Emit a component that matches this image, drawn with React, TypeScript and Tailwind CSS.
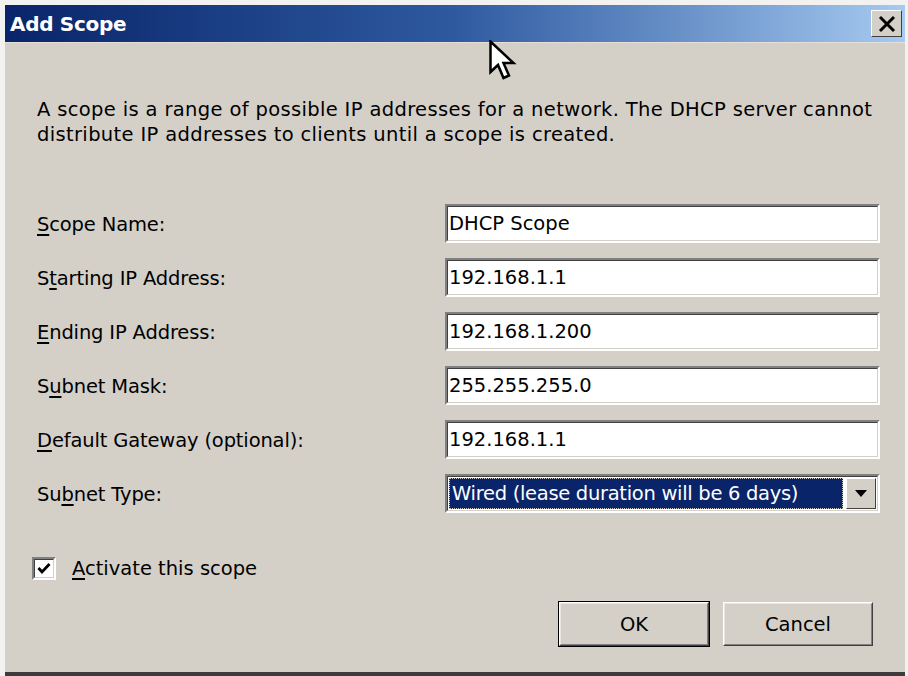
import React from "react";

const font = { fontFamily: '"DejaVu Sans", Verdana, sans-serif' };

function Key({ children }: { children: React.ReactNode }) {
  return <span className="underline underline-offset-[3px] decoration-[1.5px]">{children}</span>;
}

function Field({ label, value }: { label: React.ReactNode; value: string }) {
  return (
    <div className="flex items-center h-[54px]">
      <div className="w-[408px] pt-[3px] text-[19.5px] text-black tracking-[-0.15px]">{label}</div>
      <div className="flex-1 h-[39px] border-2 border-t-[#808080] border-l-[#808080] border-b-white border-r-white">
        <div className="h-full border border-t-[#404040] border-l-[#404040] border-b-[#d4d0c8] border-r-[#d4d0c8] bg-white flex items-center pl-[1px] pt-[1px] text-[19.5px] text-black">
          {value}
        </div>
      </div>
    </div>
  );
}

function Button({ children, isDefault }: { children: React.ReactNode; isDefault?: boolean }) {
  return (
    <div className={isDefault ? "border border-black" : "border border-transparent"}>
      <div className="w-[150px] h-[44px] border border-t-white border-l-white border-b-[#404040] border-r-[#404040] bg-[#d4d0c8]">
        <div className="h-full border border-t-[#e8e6e0] border-l-[#e8e6e0] border-b-[#808080] border-r-[#808080] flex items-center justify-center pt-[2px] text-[19.5px] text-black">
          {children}
        </div>
      </div>
    </div>
  );
}

export default function App() {
  return (
    <div style={font} className="relative w-[908px] h-[676px] bg-[#f2f2f0] pt-[5px] pl-[5px] pr-[3px] overflow-hidden">
      <div className="h-[671px] bg-[#d4d0c8] border-b-[4px] border-b-[#3c3c3c] flex flex-col">
        {/* title bar */}
        <div className="h-[37px] flex items-center justify-between pl-[5px] pr-[3px] bg-gradient-to-r from-[#0a246a] via-[#2f5aa0] to-[#a6caf0]">
          <span className="text-white font-bold text-[20px] tracking-[-0.3px] pt-[1px]">Add Scope</span>
          <div className="w-[31px] h-[27px] bg-[#d4d0c8] border border-t-white border-l-white border-b-[#404040] border-r-[#404040] flex items-center justify-center">
            <svg width="20" height="18" viewBox="0 0 20 18">
              <path d="M3 2 L17 16 M17 2 L3 16" stroke="black" strokeWidth="3" />
            </svg>
          </div>
        </div>
        <div className="h-[1px] bg-[#e4e0d8]" />

        <div className="flex flex-col pl-[32px] pr-[25px]">
          <p className="mt-[54px] text-[19.5px] leading-[25px] tracking-[0.35px] text-black">
            A scope is a range of possible IP addresses for a network. The DHCP server cannot
            <br />
            distribute IP addresses to clients until a scope is created.
          </p>

          <div className="mt-[49px] flex flex-col">
            <Field label={<><Key>S</Key>cope Name:</>} value="DHCP Scope" />
            <Field label={<>S<Key>t</Key>arting IP Address:</>} value="192.168.1.1" />
            <Field label={<><Key>E</Key>nding IP Address:</>} value="192.168.1.200" />
            <Field label={<>S<Key>u</Key>bnet Mask:</>} value="255.255.255.0" />
            <Field label={<><Key>D</Key>efault Gateway (optional):</>} value="192.168.1.1" />
            <div className="flex items-center h-[54px]">
              <div className="w-[408px] pt-[3px] text-[19.5px] text-black tracking-[-0.15px]">
                Su<Key>b</Key>net Type:
              </div>
              <div className="flex-1 h-[39px] border-2 border-t-[#808080] border-l-[#808080] border-b-white border-r-white">
                <div className="h-full border border-t-[#404040] border-l-[#404040] border-b-[#d4d0c8] border-r-[#d4d0c8] bg-white flex items-center p-[1px] gap-[3px]">
                  <div className="flex-1 h-full bg-[#0a246a] border border-dotted border-[#c8c8c8] flex items-center pl-[2px] pt-[2px] text-[19.5px] tracking-[-0.3px] text-white">
                    Wired (lease duration will be 6 days)
                  </div>
                  <div className="w-[30px] h-full bg-[#d4d0c8] border border-t-white border-l-white border-b-[#404040] border-r-[#404040] flex items-center justify-center">
                    <svg width="12" height="7" viewBox="0 0 12 7">
                      <path d="M0 0 H12 L6 7 Z" fill="black" />
                    </svg>
                  </div>
                </div>
              </div>
            </div>
          </div>

          <div className="mt-[36px] flex items-center h-[24px]">
            <div className="w-[24px] h-[23px] -ml-[5px] border-2 border-t-[#808080] border-l-[#808080] border-b-white border-r-white">
              <div className="w-full h-full bg-white border border-t-[#404040] border-l-[#404040] border-b-[#d4d0c8] border-r-[#d4d0c8] flex items-center justify-center">
                <svg width="14" height="13" viewBox="0 0 14 13">
                  <path d="M1.5 6 L5 10 L12.5 2" stroke="black" strokeWidth="2.8" fill="none" />
                </svg>
              </div>
            </div>
            <span className="ml-[16px] pt-[2px] text-[19.5px] text-black">
              <Key>A</Key>ctivate this scope
            </span>
          </div>

          <div className="mt-[21px] flex justify-end gap-[12px] pr-[6px]">
            <Button isDefault>OK</Button>
            <Button>Cancel</Button>
          </div>
        </div>
      </div>

      {/* mouse pointer */}
      <svg className="absolute left-[489px] top-[40px]" width="28" height="42" viewBox="0 0 28 42">
        <path
          d="M1.5 1.5 L1.5 32 L9 25 L14.5 38 L20 35.5 L14.5 23 L24.5 23 Z"
          fill="white"
          stroke="black"
          strokeWidth="2.5"
          strokeLinejoin="miter"
        />
      </svg>
    </div>
  );
}
